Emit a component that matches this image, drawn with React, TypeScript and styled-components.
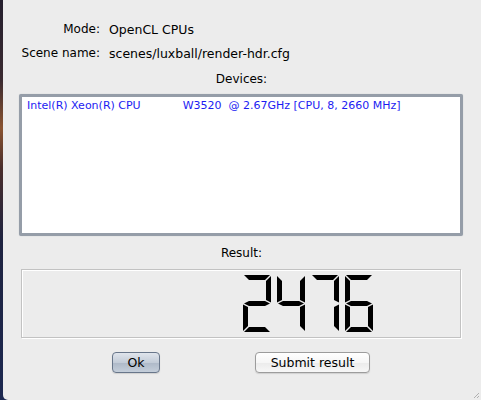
import React from 'react'
import styled, { createGlobalStyle } from 'styled-components'

const GlobalStyle = createGlobalStyle`
  html, body {
    margin: 0;
    padding: 0;
    width: 481px;
    height: 400px;
    overflow: hidden;
    background: #1d2238;
  }
  #root {
    height: 100%;
  }
`

const Desktop = styled.div`
  display: flex;
  height: 400px;
  padding-left: 3px;
  background: linear-gradient(180deg, #241f2e 0%, #3a2a30 20%, #8a5431 32%, #4a2e2c 42%, #1e2340 60%, #1c2850 100%);
`

const Window = styled.div`
  position: relative;
  flex: 1;
  display: flex;
  flex-direction: column;
  background: #ececec;
  border-bottom-left-radius: 5px;
  font-family: "DejaVu Sans", "Liberation Sans", sans-serif;
  color: #000;
  padding-top: 17px;
`

const InfoGrid = styled.div`
  display: grid;
  grid-template-columns: 97px 1fr;
  column-gap: 9px;
  grid-auto-rows: 24px;
  align-items: center;
  font-size: 12.5px;
`

const Label = styled.span`
  text-align: right;
  font-size: 12px;
`

const Value = styled.span`
  white-space: nowrap;
`

const Heading = styled.div<{ $top: number }>`
  margin-top: ${p => p.$top}px;
  height: 18px;
  line-height: 18px;
  font-size: 12px;
  text-align: center;
  padding-right: 1px;
`

const DeviceList = styled.ul`
  list-style: none;
  margin: 6px 18px 0 16px;
  padding: 0;
  height: 142px;
  box-sizing: border-box;
  background: #fff;
  border: 3px solid #959da8;
  border-radius: 2px;
  box-shadow: 0 0 1px 0 #b6bcc4;
`

const DeviceItem = styled.li`
  padding: 1px 0 0 5px;
  height: 16px;
  line-height: 16px;
  font-size: 11px;
  color: #1c1cf2;
  white-space: pre;
`

const LcdFrame = styled.div`
  margin: 7px 20px 0 18px;
  height: 69px;
  box-sizing: border-box;
  border: 1px solid #c2c2c2;
  box-shadow: inset 1px 1px 0 #fff, 1px 1px 0 #fff;
  display: flex;
  align-items: center;
  padding-left: 221px;
`

const ButtonRow = styled.div`
  display: flex;
  gap: 95px;
  margin-top: 14px;
  padding-left: 109px;
`

const Button = styled.button<{ $primary?: boolean }>`
  height: 21px;
  width: ${p => (p.$primary ? 48 : 115)}px;
  padding: 0;
  font-family: "DejaVu Sans", "Liberation Sans", sans-serif;
  font-size: 12.5px;
  color: #000;
  border-radius: 4px;
  border: 1px solid ${p => (p.$primary ? '#68768a' : '#9c9c9c')};
  background: ${p =>
    p.$primary
      ? 'linear-gradient(180deg, #e0e5ec 0%, #c3ccd8 50%, #aeb9c8 52%, #c4ceda 100%)'
      : 'linear-gradient(180deg, #ffffff 0%, #f6f6f6 50%, #ebebeb 52%, #f7f7f7 100%)'};
  box-shadow: 0 1px 1px rgba(0, 0, 0, 0.12);
`

const Grip = styled.svg`
  position: absolute;
  right: 1px;
  bottom: 1px;
`

// seven segment digit geometry
const W = 28
const H = 57
const T = 5
const G = 1
const M = H / 2

const SEGMENTS: Record<string, string> = {
  a: `${G},0 ${W - G},0 ${W - G - T},${T} ${G + T},${T}`,
  b: `${W},${G} ${W},${M - G} ${W - T},${M - T / 2 - G} ${W - T},${T + G}`,
  c: `${W},${M + G} ${W},${H - G} ${W - T},${H - T - G} ${W - T},${M + T / 2 + G}`,
  d: `${G + T},${H - T} ${W - G - T},${H - T} ${W - G},${H} ${G},${H}`,
  e: `0,${M + G} ${T},${M + T / 2 + G} ${T},${H - T - G} 0,${H - G}`,
  f: `0,${G} ${T},${T + G} ${T},${M - T / 2 - G} 0,${M - G}`,
  g: `${G},${M} ${G + T},${M - T / 2} ${W - G - T},${M - T / 2} ${W - G},${M} ${W - G - T},${M + T / 2} ${G + T},${M + T / 2}`,
}

const DIGITS: Record<string, string> = {
  '0': 'abcdef',
  '1': 'bc',
  '2': 'abged',
  '3': 'abgcd',
  '4': 'fgbc',
  '5': 'afgcd',
  '6': 'afgedc',
  '7': 'abc',
  '8': 'abcdefg',
  '9': 'abcdfg',
}

const PITCH = 34

const LcdNumber: React.FC<{ value: string }> = ({ value }) => (
  <svg width={value.length * PITCH} height={H} viewBox={`0 0 ${value.length * PITCH} ${H}`}>
    {value.split('').map((ch, i) => (
      <g key={i} transform={`translate(${i * PITCH} 0)`}>
        {DIGITS[ch].split('').map(s => (
          <polygon key={s} points={SEGMENTS[s]} fill="#000" />
        ))}
      </g>
    ))}
  </svg>
)

export default function App() {
  return (
    <Desktop>
      <GlobalStyle />
      <Window>
        <InfoGrid>
          <Label>Mode:</Label>
          <Value>OpenCL CPUs</Value>
          <Label>Scene name:</Label>
          <Value>scenes/luxball/render-hdr.cfg</Value>
        </InfoGrid>
        <Heading $top={5}>Devices:</Heading>
        <DeviceList>
          <DeviceItem>{'Intel(R) Xeon(R) CPU            W3520  @ 2.67GHz [CPU, 8, 2660 MHz]'}</DeviceItem>
        </DeviceList>
        <Heading $top={8}>Result:</Heading>
        <LcdFrame>
          <LcdNumber value="2476" />
        </LcdFrame>
        <ButtonRow>
          <Button $primary>Ok</Button>
          <Button>Submit result</Button>
        </ButtonRow>
        <Grip width="8" height="8" viewBox="0 0 8 8">
          <path d="M7 2 L2 7 M7 5 L5 7" stroke="#b0b0b0" strokeWidth="1" />
        </Grip>
      </Window>
    </Desktop>
  )
}
